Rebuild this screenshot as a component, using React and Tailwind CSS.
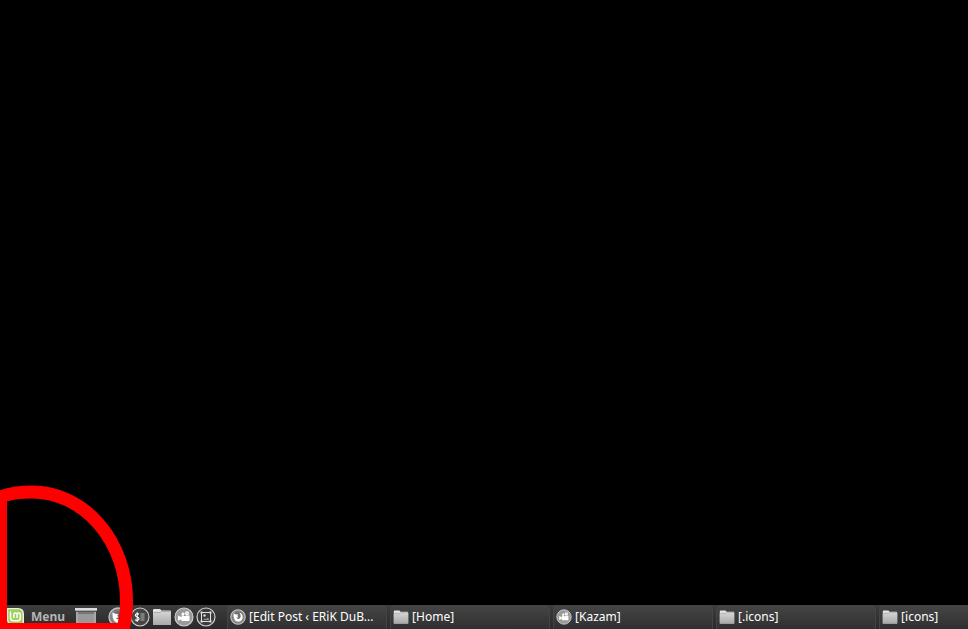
const windows = [
  { title: "[Edit Post ‹ ERiK DuB...", icon: BrowserIcon },
  { title: "[Home]", icon: FolderIcon },
  { title: "[Kazam]", icon: CameraIcon },
  { title: "[.icons]", icon: FolderIcon },
  { title: "[icons]", icon: FolderIcon },
];

const launchers = [
  { label: "Web browser", icon: BrowserIcon },
  { label: "Terminal", icon: TerminalIcon },
  { label: "Files", icon: FolderIcon },
  { label: "Kazam", icon: CameraIcon },
  { label: "Screenshot", icon: ScreenshotIcon },
];

function MintLogo() {
  return (
    <svg viewBox="0 0 18 18" className="size-[18px] shrink-0" aria-hidden="true">
      <path d="M0 0H12Q18 0 18 6V17H6Q1 17 1 12V4H0Z" fill="#eef2e6" />
      <path d="M2.2 1.3H12Q16.6 1.3 16.6 6V15.6H6.5Q2.2 15.6 2.2 11.5Z" fill="#9fd05c" />
      <path
        d="M4.5 3.5V9.8Q4.5 12.7 7.3 12.7H11.6Q14.3 12.7 14.3 10V6.8Q14.3 5.1 12.7 5.1Q11.1 5.1 11.1 6.8V10M11.1 6.8Q11.1 5.1 9.5 5.1Q7.8 5.1 7.8 6.8V10"
        fill="none"
        stroke="#fff"
        strokeWidth="1.5"
      />
    </svg>
  );
}

function DesktopIcon() {
  return (
    <svg viewBox="0 0 22 20" className="h-5 w-[22px]" aria-hidden="true">
      <path d="M1 5H21V17H1Z" fill="#a8a8a8" />
      <path d="M3 5H19V7H3Z" fill="#777" />
      <path d="M3 7H19V16H3Z" fill="#999" />
      <path d="M0 1H22V4H0Z" fill="#ddd" />
      <path d="M0 3H22V4H0Z" fill="#aaa" />
      <path d="M1 4H21V5H1Z" fill="#555" />
    </svg>
  );
}

function BrowserIcon({ className }) {
  return (
    <svg viewBox="0 0 20 20" className={className} aria-hidden="true">
      <circle cx="10" cy="10" r="9" fill="#858585" stroke="#c4c4c4" strokeWidth="1.4" />
      <circle cx="10.5" cy="9.5" r="6" fill="#6e6e6e" />
      <path
        d="M4.6 5.2C3.8 11.8 6.4 15.8 10.3 15.8C14.4 15.8 16.7 12.2 15.7 8.4C15.1 6.3 13.6 4.9 11.5 4.4C13.2 6.3 13.8 8.6 13 10.5C12 12.8 9 13 7.9 11L10.7 10.4L9.2 8.8L10.3 7L7.2 6.8Z"
        fill="#fff"
      />
    </svg>
  );
}

function TerminalIcon({ className }) {
  return (
    <svg viewBox="0 0 20 20" className={className} aria-hidden="true">
      <circle cx="10" cy="10" r="9" fill="#464646" stroke="#d0d0d0" strokeWidth="1.1" />
      <path
        d="M9 7.2C7.5 6.2 5.3 6.5 5.3 8.2C5.3 10.2 9 9.5 9 11.7C9 13.5 6.5 13.8 5 12.8M7.2 5.3V14.8"
        fill="none"
        stroke="#fff"
        strokeWidth="1.1"
      />
      <path d="M10.5 6H14.5V14H10.5Z" fill="#7c7c7c" />
    </svg>
  );
}

function FolderIcon({ className }) {
  return (
    <svg viewBox="0 0 20 20" className={className} aria-hidden="true">
      <defs>
        <linearGradient id="folder" x2="0" y2="1">
          <stop stopColor="#d4d4d4" />
          <stop offset="1" stopColor="#a8a8a8" />
        </linearGradient>
      </defs>
      <path d="M1 3Q1 2 2 2H8L9.5 3.5H18Q19 3.5 19 4.5V18H1Z" fill="#e4e4e4" />
      <path d="M1 6H8L9.5 5H19V18H1Z" fill="url(#folder)" />
      <path d="M1.5 5.5H8L9.5 4.5H18.5" fill="none" stroke="#858585" strokeWidth="0.6" />
    </svg>
  );
}

function CameraIcon({ className }) {
  return (
    <svg viewBox="0 0 20 20" className={className} aria-hidden="true">
      <circle cx="10" cy="10" r="9" fill="#9a9a9a" stroke="#d2d2d2" strokeWidth="1.1" />
      <circle cx="9" cy="7" r="1.5" fill="#fff" />
      <circle cx="13" cy="6.2" r="2" fill="#fff" />
      <path d="M7.5 8.5H15.5V14H7.5V12.2L4 13.8V8.6L7.5 10.2Z" fill="#fff" />
      <path d="M10 8.5H11.5M12.5 6.2H13.5" stroke="#888" strokeWidth="1" />
    </svg>
  );
}

function ScreenshotIcon({ className }) {
  return (
    <svg viewBox="0 0 20 20" className={className} aria-hidden="true">
      <circle cx="10" cy="10" r="9" fill="#3c3c3c" stroke="#d0d0d0" strokeWidth="1.2" />
      <path d="M5.5 5.5H14.5V14.5H5.5Z" fill="none" stroke="#e2e2e2" strokeWidth="1" />
      <path d="M4.5 4.5H6.5V6.5H4.5ZM13.5 4.5H15.5V6.5H13.5ZM4.5 13.5H6.5V15.5H4.5ZM13.5 13.5H15.5V15.5H13.5Z" fill="#e2e2e2" />
      <circle cx="8.5" cy="8.5" r="1.2" fill="#ddd" />
      <path d="M7 13L9 11.5L10 12.2L12 10.5L13.2 13Z" fill="#999" />
    </svg>
  );
}

// Hand-drawn marker around the menu corner
function Marker() {
  return (
    <svg
      viewBox="0 0 140 149"
      className="pointer-events-none absolute bottom-0 left-0 z-10 h-[149px] w-[140px] blur-[0.6px]"
      aria-hidden="true"
    >
      <path
        d="M0.5 149.5V17C10 13 21 12 32 12A94.5 109 0 0 1 126.5 121C127 132 125 140 123 149.5Z"
        fill="none"
        stroke="#f00"
        strokeWidth="13"
        strokeLinejoin="round"
      />
    </svg>
  );
}

export default function App() {
  return (
    <div className="relative flex h-screen flex-col overflow-hidden bg-black font-['Noto_Sans',sans-serif] text-xs">
      <main className="flex-1" />

      <footer className="flex h-6 shrink-0 items-stretch bg-linear-to-b from-[#3d3d3d] to-[#292929]">
        <button type="button" className="flex shrink-0 items-center gap-[7px] pl-1.5 font-bold text-[#b5b5b5]">
          <MintLogo />
          Menu
        </button>
        <button type="button" aria-label="Show desktop" className="ml-2.5 flex shrink-0 items-center">
          <DesktopIcon />
        </button>

        <nav aria-label="Launchers" className="ml-[11px] flex shrink-0 items-center gap-0.5">
          {launchers.map(({ label, icon: Icon }) => (
            <button key={label} type="button" aria-label={label}>
              <Icon className="size-5" />
            </button>
          ))}
        </nav>

        <div className="ml-[11px] flex min-w-0 flex-1 gap-[3px] overflow-hidden">
          {windows.map(({ title, icon: Icon }) => (
            <button
              key={title}
              type="button"
              className="flex w-40 shrink-0 items-center gap-[3px] rounded-t-sm border-x border-y border-[#444] border-b-[#303030] bg-linear-to-b from-[#454545] to-[#303030] pl-0.5 text-left text-white"
            >
              <Icon className="size-4 shrink-0" />
              <span className="truncate">{title}</span>
            </button>
          ))}
        </div>
      </footer>

      <Marker />
    </div>
  );
}
